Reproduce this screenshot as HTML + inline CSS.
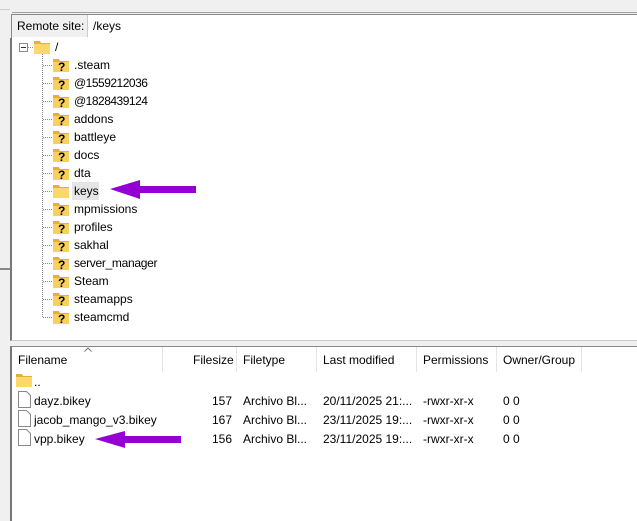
<!DOCTYPE html>
<html><head><style>
body{margin:0;width:637px;height:520px;position:relative;overflow:hidden;background:#f0f0f0;font-family:"Liberation Sans",sans-serif;font-size:12px;color:#000}
.a{position:absolute}
.t{position:absolute;white-space:nowrap;line-height:14px}
</style></head><body>
<div class="a" style="left:12px;top:12px;width:625px;height:1px;background:#a0a0a0"></div>
<div class="a" style="left:0;top:268px;width:10px;height:2px;background:#888"></div>
<div class="a" style="left:0;top:9px;width:10px;height:1px;background:#ccc"></div>
<div class="a" style="left:11px;top:14px;width:626px;height:24px;background:#fff;border-top:1px solid #888;border-left:1px solid #888"></div>
<div class="a" style="left:12px;top:15px;width:75px;height:22px;background:#f0f0f0;border-right:1px solid #ccc"></div>
<div class="t" style="left:17px;top:19px">Remote site:</div>
<div class="t" style="left:93px;top:19px">/keys</div>
<div class="a" style="left:10px;top:38px;width:627px;height:302px;background:#fff;border-left:2px solid #777;border-bottom:1px solid #ccc"></div>
<svg class="a" style="left:0;top:0" width="637" height="340">
<rect x="19.5" y="43.5" width="8" height="8" fill="#fff" stroke="#8a8a8a"/>
<line x1="21" y1="47.5" x2="26" y2="47.5" stroke="#333"/>
<line x1="28" y1="47.5" x2="34" y2="47.5" stroke="#888" stroke-dasharray="1,1"/>
<line x1="42.5" y1="54" x2="42.5" y2="317" stroke="#888" stroke-dasharray="1,1"/>
<g stroke="#888" stroke-dasharray="1,1">
<line x1="43" y1="65.5" x2="53" y2="65.5"/><line x1="43" y1="83.5" x2="53" y2="83.5"/><line x1="43" y1="101.5" x2="53" y2="101.5"/><line x1="43" y1="119.5" x2="53" y2="119.5"/><line x1="43" y1="137.5" x2="53" y2="137.5"/><line x1="43" y1="155.5" x2="53" y2="155.5"/><line x1="43" y1="173.5" x2="53" y2="173.5"/><line x1="43" y1="191.5" x2="53" y2="191.5"/><line x1="43" y1="209.5" x2="53" y2="209.5"/><line x1="43" y1="227.5" x2="53" y2="227.5"/><line x1="43" y1="245.5" x2="53" y2="245.5"/><line x1="43" y1="263.5" x2="53" y2="263.5"/><line x1="43" y1="281.5" x2="53" y2="281.5"/><line x1="43" y1="299.5" x2="53" y2="299.5"/><line x1="43" y1="317.5" x2="53" y2="317.5"/>
</g>
<defs>
<g id="q"><path d="M0 1h6l1 2h9v11H0z" fill="#e8b030"/><rect x="0" y="4" width="16" height="10" fill="#f8d060"/><text x="5" y="13" font-family="Liberation Sans" font-weight="bold" font-size="12">?</text></g>
<g id="f"><path d="M0 1h6l1 2h9v11H0z" fill="#e8b030"/><rect x="0" y="4" width="16" height="10" fill="#fcd868"/></g>
</defs>
<use href="#f" x="34" y="40"/>
<use href="#q" x="53" y="58"/><use href="#q" x="53" y="76"/><use href="#q" x="53" y="94"/><use href="#q" x="53" y="112"/><use href="#q" x="53" y="130"/><use href="#q" x="53" y="148"/><use href="#q" x="53" y="166"/>
<rect x="72" y="182" width="27" height="18" fill="#e5e5e5"/>
<use href="#f" x="53" y="184"/>
<use href="#q" x="53" y="202"/><use href="#q" x="53" y="220"/><use href="#q" x="53" y="238"/><use href="#q" x="53" y="256"/><use href="#q" x="53" y="274"/><use href="#q" x="53" y="292"/><use href="#q" x="53" y="310"/>
<path d="M110 189L140 180V186H196V193H140V199Z" fill="#9400d3"/>
</svg>
<div class="t" style="left:55px;top:40px">/</div>
<div class="t" style="left:74px;top:58px">.steam</div>
<div class="t" style="left:74px;top:76px;letter-spacing:-0.5px">@1559212036</div>
<div class="t" style="left:74px;top:94px;letter-spacing:-0.5px">@1828439124</div>
<div class="t" style="left:74px;top:112px">addons</div>
<div class="t" style="left:74px;top:130px">battleye</div>
<div class="t" style="left:74px;top:148px">docs</div>
<div class="t" style="left:74px;top:166px">dta</div>
<div class="t" style="left:74px;top:184px">keys</div>
<div class="t" style="left:74px;top:202px">mpmissions</div>
<div class="t" style="left:74px;top:220px">profiles</div>
<div class="t" style="left:74px;top:238px">sakhal</div>
<div class="t" style="left:74px;top:256px;letter-spacing:-0.3px">server_manager</div>
<div class="t" style="left:74px;top:274px">Steam</div>
<div class="t" style="left:74px;top:292px">steamapps</div>
<div class="t" style="left:74px;top:310px">steamcmd</div>
<div class="a" style="left:10px;top:346px;width:627px;height:174px;background:#fff;border-left:2px solid #777;border-top:1px solid #888"></div>
<div class="a" style="left:162px;top:347px;width:1px;height:25px;background:#e5e5e5"></div>
<div class="a" style="left:236px;top:347px;width:1px;height:25px;background:#e5e5e5"></div>
<div class="a" style="left:316px;top:347px;width:1px;height:25px;background:#e5e5e5"></div>
<div class="a" style="left:416px;top:347px;width:1px;height:25px;background:#e5e5e5"></div>
<div class="a" style="left:496px;top:347px;width:1px;height:25px;background:#e5e5e5"></div>
<div class="a" style="left:581px;top:347px;width:1px;height:25px;background:#e5e5e5"></div>
<svg class="a" style="left:0;top:340px" width="637" height="120">
<path d="M84.5 11.5L88 8L91.5 11.5" fill="none" stroke="#777"/>
<use href="#f" x="16" y="33"/>
<g fill="#fff" stroke="#888"><path d="M18.5 51.5h8l4 4v12h-12z"/><path d="M18.5 70.5h8l4 4v12h-12z"/><path d="M18.5 89.5h8l4 4v12h-12z"/></g>
<path d="M95 99L125 91V96H181V103H125V108Z" fill="#9400d3"/>
</svg>
<div class="t" style="left:18px;top:353px">Filename</div>
<div class="t" style="left:193px;top:353px">Filesize</div>
<div class="t" style="left:243px;top:353px">Filetype</div>
<div class="t" style="left:323px;top:353px">Last modified</div>
<div class="t" style="left:423px;top:353px">Permissions</div>
<div class="t" style="left:503px;top:353px">Owner/Group</div>
<div class="t" style="left:34px;top:375px">..</div>
<div class="t" style="left:34px;top:394px">dayz.bikey</div>
<div class="t" style="left:34px;top:413px">jacob_mango_v3.bikey</div>
<div class="t" style="left:34px;top:432px">vpp.bikey</div>
<div class="t" style="left:212px;top:394px">157</div>
<div class="t" style="left:212px;top:413px">167</div>
<div class="t" style="left:212px;top:432px">156</div>
<div class="t" style="left:243px;top:394px">Archivo Bl...</div>
<div class="t" style="left:243px;top:413px">Archivo Bl...</div>
<div class="t" style="left:243px;top:432px">Archivo Bl...</div>
<div class="t" style="left:323px;top:394px">20/11/2025 21:...</div>
<div class="t" style="left:323px;top:413px">23/11/2025 19:...</div>
<div class="t" style="left:323px;top:432px">23/11/2025 19:...</div>
<div class="t" style="left:423px;top:394px">-rwxr-xr-x</div>
<div class="t" style="left:423px;top:413px">-rwxr-xr-x</div>
<div class="t" style="left:423px;top:432px">-rwxr-xr-x</div>
<div class="t" style="left:503px;top:394px">0 0</div>
<div class="t" style="left:503px;top:413px">0 0</div>
<div class="t" style="left:503px;top:432px">0 0</div>
</body></html>
